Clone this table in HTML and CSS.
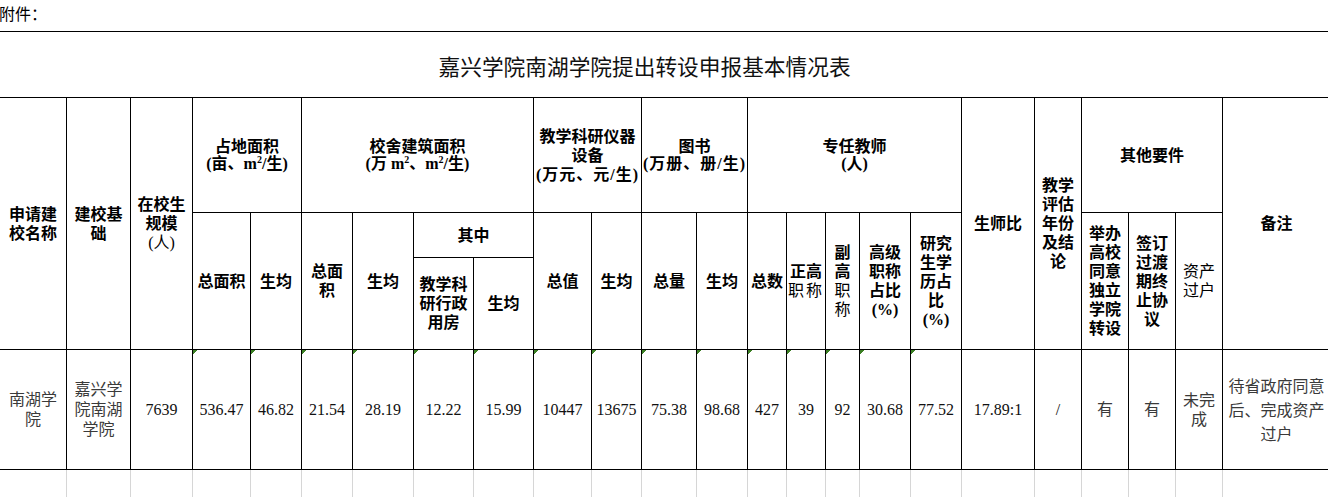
FILE: index.html
```html
<!DOCTYPE html>
<html lang="zh-CN">
<head>
<meta charset="utf-8">
<title>嘉兴学院南湖学院提出转设申报基本情况表</title>
<link rel="stylesheet" href="styles.css">
</head>
<body>
<div class="attach">附件：</div>
<table class="sheet">
  <colgroup>
    <col class="w67"><col class="w64"><col class="w62"><col class="w58"><col class="w51"><col class="w51">
    <col class="w61"><col class="w60"><col class="w60"><col class="w58"><col class="w50"><col class="w55">
    <col class="w51"><col class="w39"><col class="w39"><col class="w34"><col class="w51"><col class="w51">
    <col class="w73"><col class="w47"><col class="w47"><col class="w47"><col class="w47"><col class="w108">
  </colgroup>
  <tbody>
    <tr class="r-title">
      <td colspan="24" class="title">嘉兴学院南湖学院提出转设申报基本情况表</td>
    </tr>
    <tr class="r-h1">
      <th rowspan="3">申请建<br>校名称</th>
      <th rowspan="3">建校基<br>础</th>
      <th rowspan="3">在校生<br>规模<br><span class="lt">(人)</span></th>
      <th colspan="2" class="tight">占地面积<br>(亩、m<sup>2</sup>/生)</th>
      <th colspan="4" class="tight">校舍建筑面积<br>(万 m<sup>2</sup>、m<sup>2</sup>/生)</th>
      <th colspan="2">教学科研仪器<br>设备<br><span class="sp">(万元、元/生)</span></th>
      <th colspan="2" class="tight">图书<br><span class="sp">(万册、册/生)</span></th>
      <th colspan="5" class="tight">专任教师<br>(人)</th>
      <th rowspan="3">生师比</th>
      <th rowspan="3">教学<br>评估<br>年份<br>及结<br>论</th>
      <th colspan="3">其他要件</th>
      <th rowspan="3">备注</th>
    </tr>
    <tr class="r-h2">
      <th rowspan="2">总面积</th>
      <th rowspan="2">生均</th>
      <th rowspan="2">总面<br>积</th>
      <th rowspan="2">生均</th>
      <th colspan="2">其中</th>
      <th rowspan="2">总值</th>
      <th rowspan="2">生均</th>
      <th rowspan="2">总量</th>
      <th rowspan="2">生均</th>
      <th rowspan="2">总数</th>
      <th rowspan="2">正高<br><span class="lt sp1">职称</span></th>
      <th rowspan="2">副<br>高<br><span class="lt">职<br>称</span></th>
      <th rowspan="2">高级<br>职称<br>占比<br>(%)</th>
      <th rowspan="2">研究<br>生学<br>历占<br>比<br>(%)</th>
      <th rowspan="2">举办<br>高校<br>同意<br>独立<br>学院<br>转设</th>
      <th rowspan="2">签订<br>过渡<br>期终<br>止协<br>议</th>
      <th rowspan="2" class="lt-cell">资产<br>过户</th>
    </tr>
    <tr class="r-h3">
      <th>教学科<br>研行政<br>用房</th>
      <th>生均</th>
    </tr>
    <tr class="r-data">
      <td class="cjk">南湖学<br>院</td>
      <td class="cjk">嘉兴学<br>院南湖<br>学院</td>
      <td>7639</td>
      <td class="flag">536.47</td>
      <td class="flag">46.82</td>
      <td class="flag">21.54</td>
      <td class="flag">28.19</td>
      <td class="flag">12.22</td>
      <td class="flag">15.99</td>
      <td class="flag">10447</td>
      <td class="flag">13675</td>
      <td class="flag">75.38</td>
      <td class="flag">98.68</td>
      <td class="flag">427</td>
      <td class="flag">39</td>
      <td class="flag">92</td>
      <td class="flag">30.68</td>
      <td class="flag">77.52</td>
      <td>17.89:1</td>
      <td>/</td>
      <td class="cjk">有</td>
      <td class="cjk">有</td>
      <td class="cjk tight2">未完<br>成</td>
      <td class="cjk note">待省政府同意<br>后、完成资产<br>过户</td>
    </tr>
    <tr class="r-grid">
      <td></td><td></td><td></td><td></td><td></td><td></td><td></td><td></td>
      <td></td><td></td><td></td><td></td><td></td><td></td><td></td><td></td>
      <td></td><td></td><td></td><td></td><td></td><td></td><td></td><td></td>
    </tr>
  </tbody>
</table>
</body>
</html>
```
FILE: styles.css
```css
html, body {
  margin: 0;
  padding: 0;
  background: #fff;
  overflow: hidden;
}

body {
  width: 1328px;
  height: 497px;
  font-family: "Liberation Serif", "Noto Sans CJK SC", serif;
  color: #000;
}

.attach {
  height: 31px;
  line-height: 26px;
  font-size: 16px;
  font-family: "Noto Sans CJK SC", sans-serif;
  font-weight: 400;
  margin-left: -1px;
}

.sheet {
  border-collapse: collapse;
  table-layout: fixed;
  width: 1331px;
  margin-left: -1px;
}

.w34 { width: 34px; }
.w39 { width: 39px; }
.w47 { width: 47px; }
.w50 { width: 50px; }
.w51 { width: 51px; }
.w55 { width: 55px; }
.w58 { width: 58px; }
.w60 { width: 60px; }
.w61 { width: 61px; }
.w62 { width: 62px; }
.w64 { width: 64px; }
.w67 { width: 67px; }
.w73 { width: 73px; }
.w108 { width: 108px; }

.sheet th,
.sheet td {
  padding: 0;
  border: 1px solid #000;
  text-align: center;
  vertical-align: middle;
  font-size: 16px;
  line-height: 19px;
  white-space: nowrap;
}

.sheet th {
  font-weight: 700;
}

.sheet sup {
  font-size: 10px;
  line-height: 0;
  vertical-align: 6px;
}

.r-title { height: 66px; }
.r-h1 { height: 115px; }
.r-h2 { height: 45px; }
.r-h3 { height: 92px; }
.r-data { height: 120px; }
.r-grid { height: 30px; }

.sheet .title {
  border-left: none;
  border-right: none;
  font-family: "Noto Sans CJK SC", sans-serif;
  font-size: 21.7px;
  font-weight: 400;
  line-height: 28px;
  padding: 3px 41px 0 0;
  color: #111;
}

.sheet .tight {
  line-height: 17px;
}

.sp {
  letter-spacing: 1px;
}

.sp1 {
  letter-spacing: 2px;
}

.lt {
  font-weight: 400;
}

.sheet .lt-cell {
  font-weight: 400;
}

.sheet td {
  color: #111;
  font-weight: 400;
}

.sheet td.cjk {
  color: #3a3a3a;
  line-height: 20px;
}

.sheet td.tight2 {
  line-height: 19px;
}

.sheet td.note {
  line-height: 24px;
  padding-top: 2px;
}

.sheet td.flag {
  background-image: linear-gradient(135deg, #3b7f23 0, #3b7f23 3px, transparent 3px);
  background-size: 6px 6px;
  background-repeat: no-repeat;
  background-position: 0 0;
}

.sheet .r-grid td {
  border-top: none;
  border-bottom: none;
  border-left: 1px solid #d6d6d6;
  border-right: 1px solid #d6d6d6;
}
```
